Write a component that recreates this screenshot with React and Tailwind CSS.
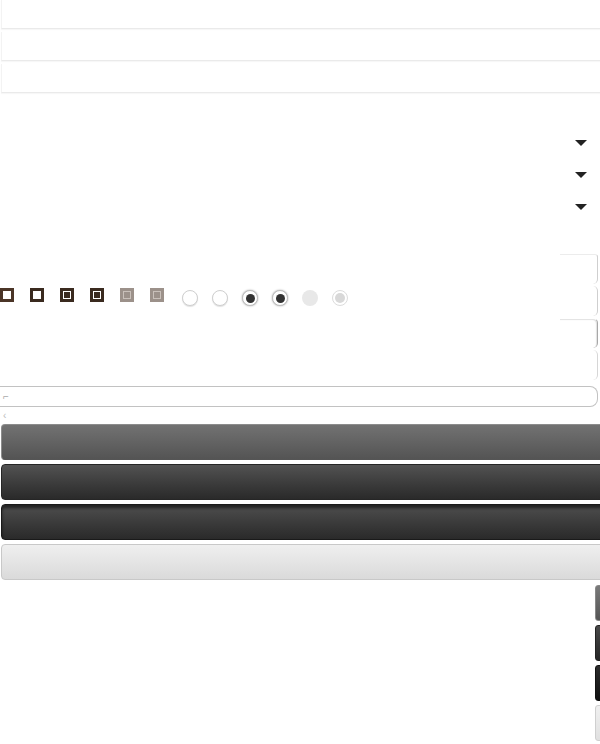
import React from "react";

function Check({ variant }) {
  const outer = {
    a: "bg-[#4b3527]",
    b: "bg-[#3a2a1f]",
    c: "bg-[#3a2a1f]",
    d: "bg-[#3a2a1f]",
    e: "bg-[#9c918a]",
    f: "bg-[#9c918a]",
  }[variant];
  const inner = {
    a: "w-[8px] h-[8px] bg-white",
    b: "w-[8px] h-[8px] bg-white",
    c: "w-[8px] h-[8px] border border-white",
    d: "w-[8px] h-[8px] border border-white",
    e: "w-[8px] h-[8px] border border-[#c9c0ba]",
    f: "w-[8px] h-[8px] border border-[#c9c0ba]",
  }[variant];
  return (
    <div className="w-[30px] shrink-0">
      <div className={`w-[14px] h-[14px] flex items-center justify-center ${outer}`}>
        <div className={inner} />
      </div>
    </div>
  );
}

function Radio({ variant }) {
  if (variant === "off")
    return <div className="w-[16px] h-[16px] rounded-full bg-white border border-[#cfcfcf] shadow-[0_1px_1px_rgba(0,0,0,0.12)]" />;
  if (variant === "on")
    return (
      <div className="w-[16px] h-[16px] rounded-full bg-white border border-[#bdbdbd] shadow-[0_0_2px_rgba(0,0,0,0.35)] flex items-center justify-center">
        <div className="w-[9px] h-[9px] rounded-full bg-[#333]" />
      </div>
    );
  if (variant === "dis")
    return <div className="w-[16px] h-[16px] rounded-full bg-[#e8e8e8]" />;
  return (
    <div className="w-[16px] h-[16px] rounded-full bg-white border border-[#dcdcdc] flex items-center justify-center">
      <div className="w-[10px] h-[10px] rounded-full bg-[#d8d8d8]" />
    </div>
  );
}

export default function App() {
  return (
    <div
      className="w-[600px] h-[744px] bg-white overflow-hidden"
      style={{ fontFamily: '"Liberation Sans", Arial, sans-serif' }}
    >
      {/* top rows */}
      <div className="flex flex-col">
        {[0, 1, 2].map((i) => (
          <div
            key={i}
            className="h-[29px] mb-[3px] ml-[1px] border-b border-l border-[#eaeaea] border-l-[#f3f3f3] shadow-[0_1px_1px_rgba(0,0,0,0.03)]"
          />
        ))}
      </div>

      {/* dropdown arrows */}
      <div className="mt-[31px] flex flex-col">
        {[0, 1, 2].map((i) => (
          <div key={i} className="h-[32px] flex items-center justify-end pr-[13px]">
            <div className="w-0 h-0 border-l-[6px] border-r-[6px] border-t-[6px] border-l-transparent border-r-transparent border-t-[#222]" />
          </div>
        ))}
      </div>

      {/* checks / radios + right boxes */}
      <div className="mt-[31px] flex">
        <div className="flex-1">
          <div className="mt-[34px] flex items-start">
            <Check variant="a" />
            <Check variant="b" />
            <Check variant="c" />
            <Check variant="d" />
            <Check variant="e" />
            <Check variant="f" />
            <div className="ml-[2px] mt-[2px] flex gap-[14px]">
              <Radio variant="off" />
              <Radio variant="off" />
              <Radio variant="on" />
              <Radio variant="on" />
              <Radio variant="dis" />
              <Radio variant="disOn" />
            </div>
          </div>
        </div>
        <div className="w-[38px] mr-[2px] flex flex-col gap-[2px]">
          <div className="h-[30px] border-t border-r border-[#ececec] border-r-[#cfcfcf] rounded-tr-[3px] rounded-br-[5px]" />
          <div className="h-[30px] border-r border-[#cfcfcf] rounded-r-[5px]" />
          <div className="h-[30px] border-r border-t border-t-transparent border-[#a8a8a8] rounded-r-[5px] shadow-[inset_-1px_1px_1px_rgba(0,0,0,0.12)]" />
          <div className="h-[30px] border-r border-[#d6d6d6] rounded-r-[5px]" />
        </div>
      </div>

      {/* wide field */}
      <div className="mt-[6px] mr-[2px] h-[21px] border-t border-r border-b border-[#c2c2c2] rounded-r-[8px] flex items-center pl-[3px]">
        <span className="text-[10px] leading-none text-[#aaa]">⌐</span>
      </div>
      <div className="h-[17px] flex items-center pl-[3px]">
        <span className="text-[10px] leading-none text-[#bbb]">‹</span>
      </div>

      {/* buttons */}
      <div className="flex flex-col ml-[1px] w-[640px]">
        <div className="h-[36px] mb-[4px] rounded-l-[4px] border border-[#8c8c8c] border-b-[#555] bg-gradient-to-b from-[#727272] to-[#545454]" />
        <div className="h-[36px] mb-[4px] rounded-l-[4px] border border-[#262626] bg-gradient-to-b from-[#525252] to-[#2a2a2a]" />
        <div className="h-[36px] mb-[4px] rounded-l-[4px] border border-[#1a1a1a] bg-gradient-to-b from-[#4e4e4e] to-[#2a2a2a] shadow-[inset_0_3px_3px_rgba(0,0,0,0.55)]" />
        <div className="h-[36px] mb-[4px] rounded-l-[4px] border border-[#c8c8c8] bg-gradient-to-b from-[#efefef] to-[#dadada]" />
      </div>

      {/* cut-off buttons at right */}
      <div className="mt-[1px] pl-[595px] flex flex-col">
        <div className="w-[20px] h-[36px] mb-[4px] rounded-l-[3px] border border-[#888] bg-gradient-to-b from-[#7a7a7a] to-[#555]" />
        <div className="w-[20px] h-[36px] mb-[4px] rounded-l-[3px] border border-[#222] bg-gradient-to-b from-[#4a4a4a] to-[#262626]" />
        <div className="w-[20px] h-[36px] mb-[4px] rounded-l-[3px] border border-[#111] bg-gradient-to-b from-[#2c2c2c] to-[#111]" />
        <div className="w-[20px] h-[36px] mb-[4px] rounded-l-[3px] border border-[#cfcfcf] bg-gradient-to-b from-[#f0f0f0] to-[#e0e0e0]" />
      </div>
    </div>
  );
}
